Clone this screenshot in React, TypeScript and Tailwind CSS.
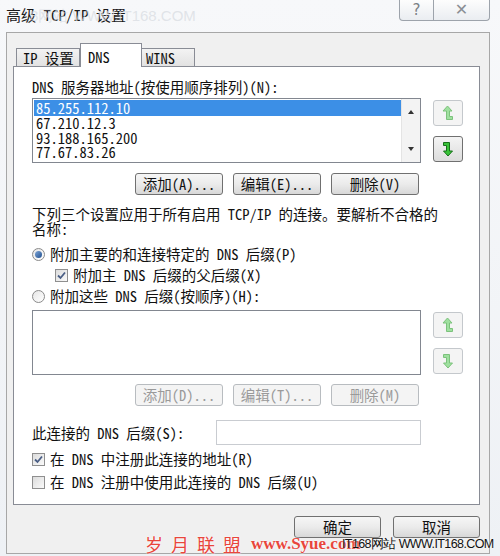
import React from "react";

const font = "font-['Noto_Sans_Mono_CJK_SC','Noto_Sans_CJK_SC',monospace]";

function WinButton({ label, disabled, className = "" }: { label: string; disabled?: boolean; className?: string }) {
  return (
    <div
      className={`flex h-[22px] items-center justify-center rounded-[3px] border text-[14.5px] leading-none ${
        disabled
          ? "border-[#b8bcc0] bg-[#f4f4f4] text-[#9a9a9a]"
          : "border-[#707070] bg-gradient-to-b from-[#f6f6f6] via-[#ebebeb] to-[#d8d8d8] text-[#111]"
      } ${className}`}
    >
      {label}
    </div>
  );
}

function ArrowButton({ dir, disabled }: { dir: "up" | "down"; disabled?: boolean }) {
  const fill = disabled ? "#9fe09f" : "#38c238";
  const stroke = disabled ? "#7cc27c" : "#17701a";
  return (
    <div
      className={`flex h-[26px] w-[30px] items-center justify-center rounded-[3px] border ${
        disabled ? "border-[#c4c8cc] bg-[#f4f4f4]" : "border-[#707070] bg-gradient-to-b from-[#f4f4f4] to-[#dcdcdc]"
      }`}
    >
      <svg width="12" height="16" viewBox="0 0 12 16">
        {dir === "up" ? (
          <path d="M5.5 1 L10 6 H7.5 V11.5 H10.5 V14.5 H4.5 V6 H1 Z" fill={fill} stroke={stroke} strokeWidth="1" strokeLinejoin="round" />
        ) : (
          <path d="M1.5 1.5 H7.5 V10 H10.5 L6 15 L1.5 10 H4.5 V4.5 H1.5 Z" fill={fill} stroke={stroke} strokeWidth="1" strokeLinejoin="round" />
        )}
      </svg>
    </div>
  );
}

function Radio({ checked }: { checked?: boolean }) {
  return (
    <div className="flex h-[13px] w-[13px] items-center justify-center rounded-full border border-[#8a8a8a] bg-gradient-to-br from-[#e6e6e6] to-[#ffffff]">
      {checked && <div className="h-[7px] w-[7px] rounded-full bg-gradient-to-br from-[#7fa6d6] to-[#1f4f8f]" />}
    </div>
  );
}

function Check({ checked }: { checked?: boolean }) {
  return (
    <div className="flex h-[13px] w-[13px] items-center justify-center border border-[#8f8f8f] bg-gradient-to-br from-[#dcdcdc] to-[#fafafa]">
      {checked && (
        <svg width="9" height="9" viewBox="0 0 9 9">
          <path d="M1 4.5 L3.5 7 L8 1.5" fill="none" stroke="#4a5e85" strokeWidth="1.8" />
        </svg>
      )}
    </div>
  );
}

function ListBox({ items }: { items: string[] }) {
  return (
    <div className="flex h-[65px] w-[389px] border border-[#828790] bg-white">
      <div className="flex-1 pt-[1px] pl-[1px]">
        {items.map((it, i) => (
          <div
            key={it}
            className={`pl-[2px] text-[14.5px] ${
              i === 0 ? "h-[16px] bg-[#3c8fe6] leading-[16px] text-white" : "h-[14.5px] leading-[14.5px] text-[#111]"
            }`}
          >
            {it}
          </div>
        ))}
      </div>
      {items.length > 0 && (
        <div className="flex w-[19px] flex-col items-center justify-between border-l border-[#e4e4e4] bg-[#f3f3f3] py-[11px]">
          <div className="h-0 w-0 border-x-[3.5px] border-b-[4px] border-x-transparent border-b-[#333]" />
          <div className="h-0 w-0 border-x-[3.5px] border-t-[4px] border-x-transparent border-t-[#333]" />
        </div>
      )}
    </div>
  );
}

export default function App() {
  return (
    <div className={`relative h-[556px] w-[500px] overflow-hidden bg-gradient-to-b from-[#f7f8fa] to-[#eef1f5] ${font} text-[#111]`}>
      {/* title bar */}
      <div className="flex h-[32px]">
        <div className="relative pl-[6px] pt-[5px] text-[15px] leading-[20px] text-[#1a1a1a]">
          高级 TCP/IP 设置
          <span className="absolute left-[30px] top-[6px] whitespace-nowrap font-['Liberation_Sans',sans-serif] text-[15px] leading-[20px] text-[#d6dae0]/70">
            8网站 WWW.IT168.COM
          </span>
        </div>
        <div className="ml-auto mr-[10px] flex h-[21px]">
          <div className="flex w-[35px] items-center justify-center rounded-bl-[4px] border border-t-0 border-[#9da3ab] bg-gradient-to-b from-[#fdfdfd] to-[#eaedf1] font-['DejaVu_Sans',sans-serif] text-[15px] text-[#7b7f85]">
            ?
          </div>
          <div className="flex w-[56px] items-center justify-center rounded-br-[4px] border border-l-0 border-t-0 border-[#9da3ab] bg-gradient-to-b from-[#fdfdfd] to-[#eaedf1] font-['DejaVu_Sans',sans-serif] text-[16px] font-bold text-[#8a8e94]">
            ✕
          </div>
        </div>
      </div>

      {/* dialog client */}
      <div className="ml-[6px] h-[522px] w-[484px] border border-[#a7a7a7] bg-[#f0f0f0] pl-[6px] pr-[9px] pt-[10px]">
        {/* tabs */}
        <div className="relative z-10 flex h-[23px] items-end pl-[3px]">
          <div className="flex h-[18px] w-[64px] items-center border border-b-0 border-[#898c95] bg-gradient-to-b from-[#f3f3f3] to-[#e2e2e2] pl-[6px] text-[14.5px]">
            IP 设置
          </div>
          <div className="-mb-[1px] flex h-[24px] w-[62px] items-start border border-b-0 border-[#898c95] bg-white pl-[7px] pt-[2px] text-[14.5px]">
            DNS
          </div>
          <div className="flex h-[18px] w-[53px] items-center border border-b-0 border-l-0 border-[#898c95] bg-gradient-to-b from-[#f3f3f3] to-[#e2e2e2] pl-[4px] text-[14.5px]">
            WINS
          </div>
        </div>

        {/* panel */}
        <div className="h-[439px] w-[467px] border border-[#898c95] bg-white pl-[18px] text-[14.5px]">
          <div className="mt-[12px] h-[15px] leading-[15px]">DNS 服务器地址(按使用顺序排列)(N):</div>
          <div className="mt-[4px] flex gap-[12px]">
            <ListBox items={["85.255.112.10", "67.210.12.3", "93.188.165.200", "77.67.83.26"]} />
            <div className="flex flex-col gap-[10px] pt-[2px]">
              <ArrowButton dir="up" disabled />
              <ArrowButton dir="down" />
            </div>
          </div>
          <div className="mt-[10px] flex w-[389px] justify-end gap-[10px] pr-[2px]">
            <WinButton label="添加(A)..." className="w-[88px]" />
            <WinButton label="编辑(E)..." className="w-[88px]" />
            <WinButton label="删除(V)" className="w-[88px]" />
          </div>
          <div className="mt-[11px] w-[420px] leading-[15px]">
            下列三个设置应用于所有启用 TCP/IP 的连接。要解析不合格的名称:
          </div>
          <div className="mt-[9px] flex h-[18px] items-center gap-[5px]">
            <Radio checked />
            <span>附加主要的和连接特定的 DNS 后缀(P)</span>
          </div>
          <div className="mt-[3px] flex h-[18px] items-center gap-[5px] pl-[23px]">
            <Check checked />
            <span>附加主 DNS 后缀的父后缀(X)</span>
          </div>
          <div className="mt-[3px] flex h-[18px] items-center gap-[5px]">
            <Radio />
            <span>附加这些 DNS 后缀(按顺序)(H):</span>
          </div>
          <div className="mt-[5px] flex gap-[12px]">
            <ListBox items={[]} />
            <div className="flex flex-col gap-[10px] pt-[2px]">
              <ArrowButton dir="up" disabled />
              <ArrowButton dir="down" disabled />
            </div>
          </div>
          <div className="mt-[9px] flex w-[389px] justify-end gap-[10px] pr-[2px]">
            <WinButton label="添加(D)..." disabled className="w-[88px]" />
            <WinButton label="编辑(T)..." disabled className="w-[88px]" />
            <WinButton label="删除(M)" disabled className="w-[88px]" />
          </div>
          <div className="mt-[14px] flex w-[389px] items-center justify-between">
            <span>此连接的 DNS 后缀(S):</span>
            <div className="h-[25px] w-[205px] border border-[#c9ccd1] bg-white" />
          </div>
          <div className="mt-[5px] flex h-[18px] items-center gap-[5px]">
            <Check checked />
            <span>在 DNS 中注册此连接的地址(R)</span>
          </div>
          <div className="mt-[5px] flex h-[18px] items-center gap-[5px]">
            <Check />
            <span>在 DNS 注册中使用此连接的 DNS 后缀(U)</span>
          </div>
        </div>

        {/* dialog buttons */}
        <div className="mt-[11px] flex justify-end gap-[12px]">
          <WinButton label="确定" className="w-[87px]" />
          <WinButton label="取消" className="w-[87px]" />
        </div>
      </div>

      {/* watermarks */}
      <div className="absolute left-[145px] top-[533px] flex h-[22px] items-center whitespace-nowrap leading-[20px]">
        <span className="text-[18px] tracking-[8px] text-[#e8463c] [text-shadow:0_0_1px_#fff,0_0_2px_#fff]">岁月联盟</span>
        <span className="ml-[2px] font-['Liberation_Serif',serif] text-[17px] font-bold text-[#e8463c] [text-shadow:0_0_1px_#fff,0_0_2px_#fff]">
          www.Syue.com
        </span>
      </div>
      <div className="absolute left-[342px] top-[537px] whitespace-nowrap font-['Liberation_Sans',sans-serif] text-[12.5px] leading-[15px] tracking-[-0.6px] text-[#111] [text-shadow:0_0_2px_#fff]">
        IT168网站 WWW.IT168.COM
      </div>
    </div>
  );
}
